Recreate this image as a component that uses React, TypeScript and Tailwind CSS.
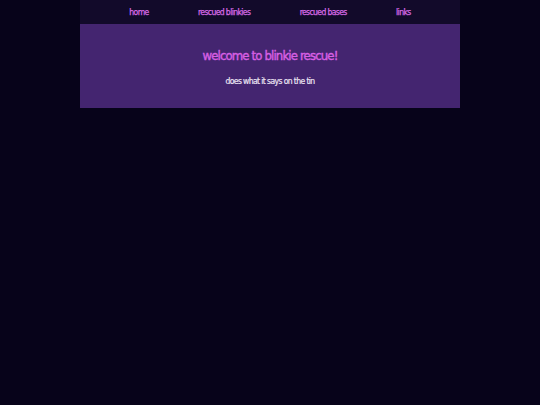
import React from "react";

const links = ["home", "rescued blinkies", "rescued bases", "links"];

export default function App() {
  return (
    <div
      className="min-h-screen w-full bg-[#07031a]"
      style={{ fontFamily: '"DejaVu Sans Condensed", "Liberation Sans", sans-serif' }}
    >
      <div className="mx-auto w-[380px]">
        {/* Nav */}
        <nav className="flex h-[24px] items-center justify-evenly bg-[#120a2a] text-[8.5px] tracking-[-0.6px] text-[#d86ae6] [-webkit-text-stroke:0.25px_currentColor]">
          {links.map((l) => (
            <span key={l} className="leading-none">
              {l}
            </span>
          ))}
        </nav>

        {/* Header */}
        <header className="flex h-[84px] flex-col items-center bg-[#442570] pt-[24px]">
          <h1 className="text-[13px] leading-[16px] tracking-[-0.85px] text-[#d75fe3] [-webkit-text-stroke:0.4px_currentColor]">
            welcome to blinkie rescue!
          </h1>
          <p className="mt-[12px] text-[8.5px] leading-[10px] tracking-[-0.6px] text-[#ece4f4] [-webkit-text-stroke:0.2px_currentColor]">
            does what it says on the tin
          </p>
        </header>
      </div>
    </div>
  );
}
